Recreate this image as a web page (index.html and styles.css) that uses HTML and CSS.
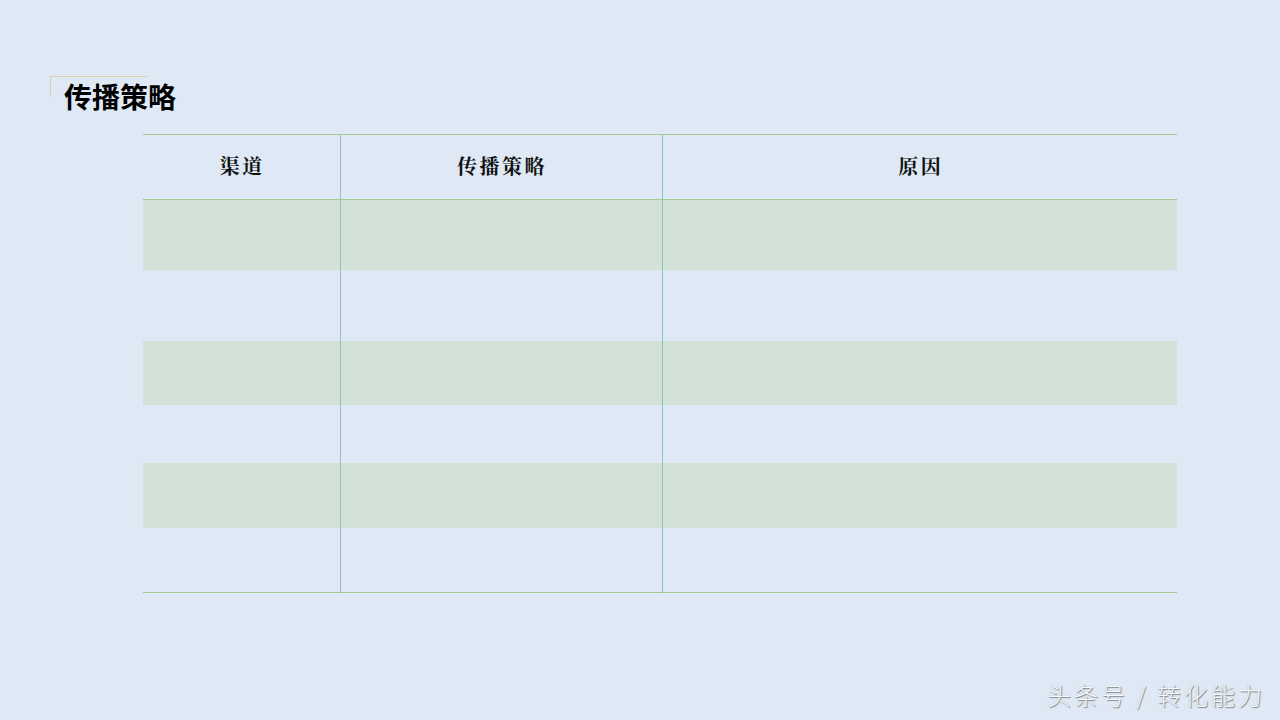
FILE: index.html
```html
<!DOCTYPE html>
<html lang="zh">
<head>
<meta charset="utf-8">
<title>传播策略</title>
<link rel="stylesheet" href="styles.css">
</head>
<body>
<div class="page">
  <h1 class="title">传播策略</h1>
  <table class="grid">
    <colgroup>
      <col class="c1"><col class="c2"><col class="c3">
    </colgroup>
    <thead>
      <tr class="head"><th>渠道</th><th>传播策略</th><th>原因</th></tr>
    </thead>
    <tbody>
      <tr class="r1 alt"><td></td><td></td><td></td></tr>
      <tr class="r2"><td></td><td></td><td></td></tr>
      <tr class="r3 alt"><td></td><td></td><td></td></tr>
      <tr class="r4"><td></td><td></td><td></td></tr>
      <tr class="r5 alt"><td></td><td></td><td></td></tr>
      <tr class="r6"><td></td><td></td><td></td></tr>
    </tbody>
  </table>
  <div class="watermark">头条号 / 转化能力</div>
</div>
</body>
</html>
```
FILE: styles.css
```css
html, body {
  margin: 0;
  padding: 0;
}
body {
  background: #dee9f5;
  width: 1280px;
  height: 720px;
  overflow: hidden;
}
.page {
  position: relative;
  width: 1280px;
  height: 720px;
  padding-top: 76px;
  box-sizing: border-box;
}
.title {
  position: relative;
  margin: 0 0 0 50px;
  padding: 0 0 0 14px;
  font-family: "Noto Sans CJK SC", sans-serif;
  font-weight: 700;
  font-size: 28px;
  line-height: 40px;
  color: #000;
  height: 58px;
}
.title::before {
  content: "";
  position: absolute;
  left: 0;
  top: 0;
  width: 96px;
  height: 20px;
  border-top: 1px solid #d7cfa6;
  border-left: 1px solid #d7cfa6;
}
.grid {
  margin-left: 143px;
  width: 1034px;
  border-collapse: collapse;
  table-layout: fixed;
  font-family: "Noto Serif CJK SC", "Noto Sans CJK SC", serif;
}
.c1 { width: 197px; }
.c2 { width: 322px; }
.c3 { width: 515px; }
.grid th, .grid td {
  padding: 0;
  border-left: 1px solid #8fc5b9;
}
.grid th:first-child, .grid td:first-child {
  border-left: none;
}
.head {
  height: 65px;
  border-top: 1px solid #a6c98e;
  border-bottom: 1px solid #a6c98e;
}
.head th {
  font-weight: 700;
  font-size: 20px;
  letter-spacing: 2.5px;
  padding: 0 0 3px 2px;
  color: #111;
  text-align: center;
  vertical-align: middle;
}
.alt td {
  background: #d2e2d8;
}
.r1 { height: 70px; }
.r2 { height: 71px; }
.r3 { height: 64px; }
.r4 { height: 58px; }
.r5 { height: 65px; }
.r6 { height: 65px; border-bottom: 1px solid #a6c98e; }
.watermark {
  position: absolute;
  right: 15px;
  bottom: 10px;
  font-family: "Noto Sans CJK SC", sans-serif;
  font-weight: 300;
  font-size: 24px;
  letter-spacing: 3px;
  line-height: 30px;
  color: #f7f9fb;
  text-shadow: 1px 1px 1px #80868c, 0 0 1px #9aa0a6;
}
```
